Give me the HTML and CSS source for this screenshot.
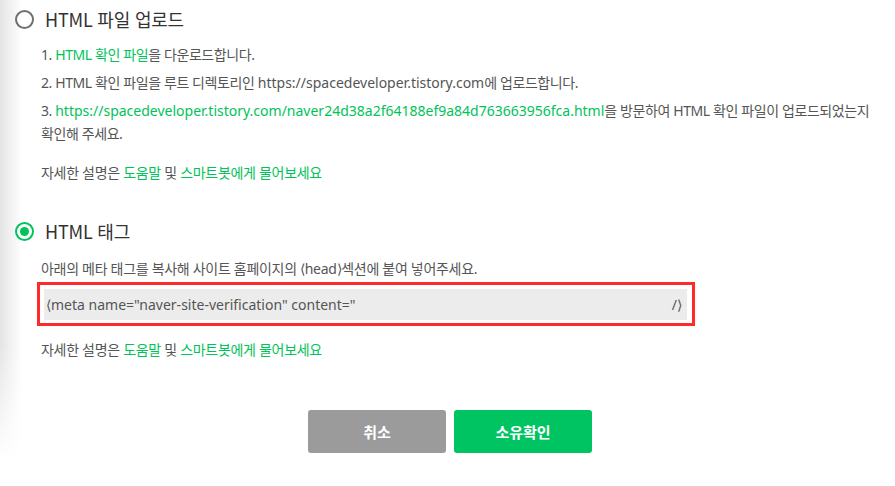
FILE: index.html
```html
<!DOCTYPE html>
<html lang="ko">
<head>
<meta charset="utf-8">
<link rel="stylesheet" href="styles.css">
</head>
<body>
<div class="page">
  <section class="option">
    <label class="option-head">
      <span class="radio"></span>
      <span class="option-title">HTML 파일 업로드</span>
    </label>
    <ol class="steps">
      <li>1. <a class="link">HTML 확인 파일</a>을 다운로드합니다.</li>
      <li>2. HTML 확인 파일을 루트 디렉토리인 <span class="url">https://spacedeveloper.tistory.com</span>에 업로드합니다.</li>
      <li>3. <a class="link url">https://spacedeveloper.tistory.com/naver24d38a2f64188ef9a84d763663956fca.html</a>을 방문하여 HTML 확인 파일이 업로드되었는지<br>확인해 주세요.</li>
    </ol>
    <p class="help">자세한 설명은 <a class="link">도움말</a> 및 <a class="link">스마트봇에게 물어보세요</a></p>
  </section>

  <section class="option option-second">
    <label class="option-head">
      <span class="radio radio-on"></span>
      <span class="option-title">HTML 태그</span>
    </label>
    <p class="desc">아래의 메타 태그를 복사해 사이트 홈페이지의 &lang;head&rang;섹션에 붙여 넣어주세요.</p>
    <div class="tag-frame">
      <div class="tag-box">
        <span>&lang;meta name="naver-site-verification" content="</span>
        <span>/&rang;</span>
      </div>
    </div>
    <p class="help help-second">자세한 설명은 <a class="link">도움말</a> 및 <a class="link">스마트봇에게 물어보세요</a></p>
  </section>

  <div class="actions">
    <button class="btn btn-cancel">취소</button>
    <button class="btn btn-ok">소유확인</button>
  </div>
</div>
</body>
</html>
```

FILE: styles.css
```css
* { box-sizing: border-box; }
html, body {
  margin: 0;
  padding: 0;
  background: #fff;
}
body {
  font-family: "Noto Sans", "Noto Sans CJK KR", sans-serif;
  color: #555;
  width: 895px;
  height: 486px;
  overflow: hidden;
  position: relative;
}
body::before {
  content: "";
  position: absolute;
  left: 0;
  top: 0;
  width: 22px;
  height: 460px;
  background: linear-gradient(to right, #e4e4e4, rgba(255,255,255,0));
  -webkit-mask-image: linear-gradient(to bottom, #000 75%, transparent 100%);
  mask-image: linear-gradient(to bottom, #000 75%, transparent 100%);
  pointer-events: none;
}
.page {
  position: relative;
  padding: 7px 0 0 15px;
}
.option-head {
  display: flex;
  align-items: center;
  gap: 11px;
  height: 24px;
}
.radio {
  width: 19px;
  height: 19px;
  border-radius: 50%;
  border: 2px solid #6f6f6f;
  flex: none;
  position: relative;
}
.radio-on {
  border-color: #00c35a;
}
.radio-on::after {
  content: "";
  position: absolute;
  left: 3px;
  top: 3px;
  width: 9px;
  height: 9px;
  border-radius: 50%;
  background: #00c35a;
}
.option-title {
  font-family: "Noto Sans CJK KR", sans-serif;
  font-size: 18px;
  line-height: 24px;
  color: #333;
  letter-spacing: -0.2px;
}
.steps {
  list-style: none;
  margin: 12px 0 0 26px;
  padding: 0;
}
.steps li {
  font-size: 14px;
  line-height: 23px;
  margin-bottom: 5px;
  letter-spacing: -0.4px;
}
.steps li:last-child { margin-bottom: 0; }
.steps .url {
  letter-spacing: 0;
}
.link {
  color: #00c35a;
  text-decoration: none;
}
.help {
  margin: 16px 0 0 26px;
  font-size: 14px;
  line-height: 23px;
  letter-spacing: -0.3px;
}
.option-second {
  margin-top: 35px;
}
.desc {
  margin: 14px 0 0 26px;
  font-size: 14px;
  line-height: 23px;
  letter-spacing: -0.3px;
}
.tag-frame {
  margin: 2px 0 0 22px;
  width: 658px;
  height: 44px;
  border: 3px solid #ff2b2b;
  padding: 4px 5px 3px 4px;
}
.tag-box {
  height: 100%;
  background: #ececec;
  display: flex;
  justify-content: space-between;
  align-items: center;
  padding: 0 5px 0 2px;
  font-size: 14px;
  color: #555;
  letter-spacing: 0;
}
.help-second {
  margin-top: 12px;
}
.actions {
  display: flex;
  gap: 8px;
  margin: 49px 0 0 293px;
}
.btn {
  width: 138px;
  height: 43px;
  border: 0;
  border-radius: 3px;
  color: #fff;
  font-family: "Noto Sans CJK KR", sans-serif;
  font-size: 15px;
  font-weight: 700;
  padding: 0;
}
.btn-cancel { background: #9b9b9b; }
.btn-ok { background: #00c462; }
```
